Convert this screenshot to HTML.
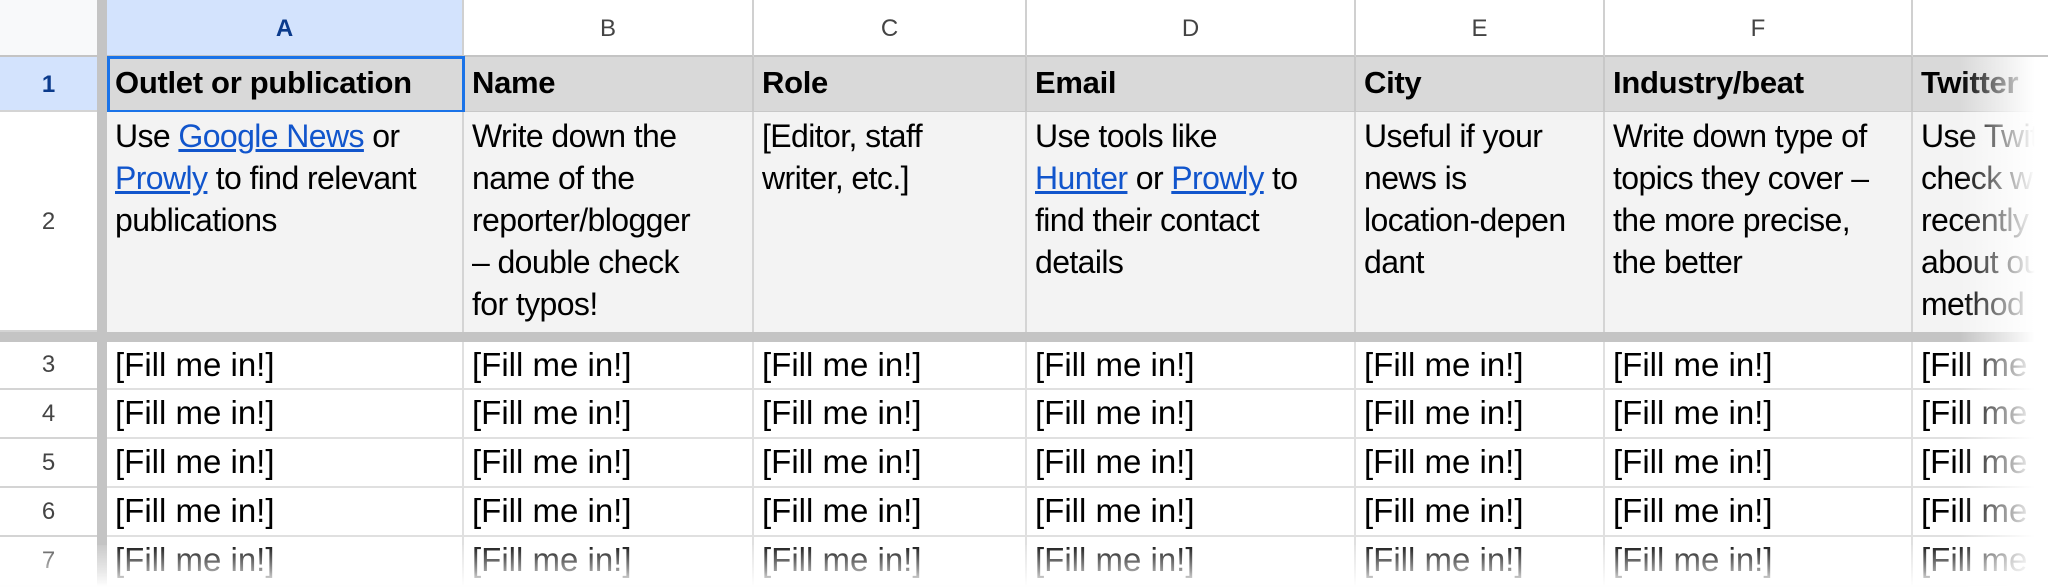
<!DOCTYPE html>
<html><head><meta charset="utf-8"><style>
*{margin:0;padding:0;box-sizing:border-box}
body{width:2048px;height:587px;overflow:hidden;background:#fff;font-family:"Liberation Sans",Arial,sans-serif;position:relative}
.c{position:absolute;overflow:hidden;white-space:nowrap}
.ch{font-size:24px;color:#444;text-align:center;line-height:58px;border-right:2px solid #d0d0d0;border-bottom:3px solid #c4c4c4;top:0;height:58px}
.rh{left:0;width:97px;text-align:center;font-size:24px;color:#444;background:#f8f9fa;border-bottom:2px solid #d4d4d4}
.h{font-size:31px;font-weight:bold;color:#000;background:#d9d9d9;top:57px;height:55px;line-height:52px;padding-left:8px;border-right:2px solid #c8c8c8;border-bottom:1px solid #c8c8c8;letter-spacing:-0.3px}
.d{font-size:32px;color:#000;background:#f3f3f3;top:112px;height:220px;line-height:42px;padding:3px 0 0 8px;border-right:2px solid #d4d4d4;letter-spacing:-0.6px}
.f{font-size:33px;color:#000;line-height:46px;padding-left:8px;border-right:2px solid #e0e0e0;border-bottom:2px solid #e0e0e0}
a{color:#1155cc;text-decoration:underline}
</style></head><body>
<div class="c" style="left:0;top:0;width:97px;height:58px;background:#f8f9fa;border-bottom:3px solid #c4c4c4"></div>
<div class="c" style="left:97px;top:0;width:10px;height:587px;background:#c4c4c4"></div>
<div class="c ch" style="left:107px;width:357px;background:#d3e3fd;color:#0b3b8c;font-weight:bold">A</div>
<div class="c ch" style="left:464px;width:290px">B</div>
<div class="c ch" style="left:754px;width:273px">C</div>
<div class="c ch" style="left:1027px;width:329px">D</div>
<div class="c ch" style="left:1356px;width:249px">E</div>
<div class="c ch" style="left:1605px;width:308px">F</div>
<div class="c ch" style="left:1913px;width:200px"></div>
<div class="c rh" style="top:57px;height:55px;line-height:55px;background:#d3e3fd;color:#0b3b8c;font-weight:bold">1</div>
<div class="c rh" style="top:112px;height:220px;line-height:220px;background:#fff">2</div>
<div class="c" style="left:0;top:332px;width:2048px;height:10px;background:#c4c4c4"></div>
<div class="c rh" style="top:342px;height:48px;line-height:46px;background:#fff">3</div>
<div class="c rh" style="top:390px;height:49px;line-height:47px;background:#fff">4</div>
<div class="c rh" style="top:439px;height:49px;line-height:47px;background:#fff">5</div>
<div class="c rh" style="top:488px;height:49px;line-height:47px;background:#fff">6</div>
<div class="c rh" style="top:537px;height:50px;line-height:47px;background:#fff">7</div>
<div class="c h" style="left:107px;width:357px">Outlet or publication</div>
<div class="c h" style="left:464px;width:290px">Name</div>
<div class="c h" style="left:754px;width:273px">Role</div>
<div class="c h" style="left:1027px;width:329px">Email</div>
<div class="c h" style="left:1356px;width:249px">City</div>
<div class="c h" style="left:1605px;width:308px">Industry/beat</div>
<div class="c h" style="left:1913px;width:200px">Twitter</div>
<div class="c" style="left:107px;top:56px;width:358px;height:57px;border:3px solid #1a73e8"></div>
<div class="c d" style="left:107px;width:357px">Use <a>Google News</a> or<br><a>Prowly</a> to find relevant<br>publications</div>
<div class="c d" style="left:464px;width:290px">Write down the<br>name of the<br>reporter/blogger<br>– double check<br>for typos!</div>
<div class="c d" style="left:754px;width:273px">[Editor, staff<br>writer, etc.]</div>
<div class="c d" style="left:1027px;width:329px">Use tools like<br><a>Hunter</a> or <a>Prowly</a> to<br>find their contact<br>details</div>
<div class="c d" style="left:1356px;width:249px">Useful if your<br>news is<br>location-depen<br>dant</div>
<div class="c d" style="left:1605px;width:308px">Write down type of<br>topics they cover –<br>the more precise,<br>the better</div>
<div class="c d" style="left:1913px;width:200px">Use Twitter to<br>check who<br>recently wrote<br>about our<br>method</div>
<div id="rows"></div>
<script>
var cols=[[107,357],[464,290],[754,273],[1027,329],[1356,249],[1605,308],[1913,200]];
var rows=[[342,48],[390,49],[439,49],[488,49],[537,50]];
var h='';
rows.forEach(function(r){cols.forEach(function(c){h+='<div class="c f" style="left:'+c[0]+'px;width:'+c[1]+'px;top:'+r[0]+'px;height:'+r[1]+'px">[Fill me in!]</div>';});});
document.getElementById('rows').outerHTML=h;
</script>
<div class="c" style="left:1960px;top:57px;width:88px;height:530px;background:linear-gradient(to right,rgba(255,255,255,0),#fff 85%)"></div>
<div class="c" style="left:0;top:545px;width:2048px;height:42px;background:linear-gradient(to bottom,rgba(255,255,255,0.1),rgba(255,255,255,0.6) 60%,#fff)"></div>
</body></html>
